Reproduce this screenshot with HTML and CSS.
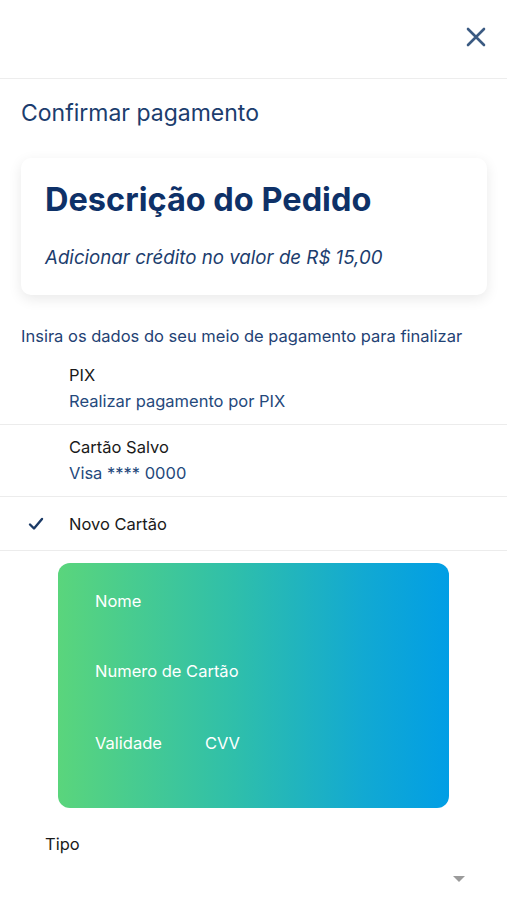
FILE: index.html
```html
<!DOCTYPE html>
<html lang="pt">
<head>
<meta charset="utf-8">
<link rel="stylesheet" href="styles.css">
</head>
<body>
<header class="topbar">
  <button class="close" aria-label="Fechar">
    <svg width="20" height="20" viewBox="0 0 20 20"><path d="M2 2 L18 18 M18 2 L2 18" stroke="#3b5a82" stroke-width="2.6" stroke-linecap="round" fill="none"/></svg>
  </button>
</header>
<main class="content">
  <h1 class="page-title">Confirmar pagamento</h1>
  <section class="order-card">
    <h2 class="order-title">Descrição do Pedido</h2>
    <p class="order-desc">Adicionar crédito no valor de R$ 15,00</p>
  </section>
  <p class="instructions">Insira os dados do seu meio de pagamento para finalizar</p>
  <ul class="methods">
    <li class="method">
      <span class="check"></span>
      <div class="method-text">
        <span class="method-name">PIX</span>
        <span class="method-sub">Realizar pagamento por PIX</span>
      </div>
    </li>
    <li class="method">
      <span class="check"></span>
      <div class="method-text">
        <span class="method-name">Cartão Salvo</span>
        <span class="method-sub">Visa **** 0000</span>
      </div>
    </li>
    <li class="method single">
      <span class="check">
        <svg width="16" height="14" viewBox="0 0 16 14"><path d="M2 7.5 L6 11.5 L14 2" stroke="#1b3a66" stroke-width="2.4" fill="none" stroke-linecap="round" stroke-linejoin="round"/></svg>
      </span>
      <div class="method-text">
        <span class="method-name">Novo Cartão</span>
      </div>
    </li>
  </ul>
  <div class="credit-card">
    <span class="cc-label">Nome</span>
    <span class="cc-label">Numero de Cartão</span>
    <div class="cc-row">
      <span class="cc-label">Validade</span>
      <span class="cc-label">CVV</span>
    </div>
  </div>
  <div class="field">
    <span class="field-label">Tipo</span>
    <div class="select"><span class="arrow"></span></div>
  </div>
</main>
</body>
</html>
```
FILE: styles.css
```css
* { box-sizing: border-box; }
html, body { margin: 0; padding: 0; background: #fff; }
body {
  font-family: Inter, "Noto Sans", sans-serif;
  color: #1a1a1a;
  width: 507px;
  overflow: hidden;
}
.topbar {
  height: 79px;
  border-bottom: 1px solid #ededed;
  display: flex;
  align-items: center;
  justify-content: flex-end;
  padding: 0 21px 4px 0;
}
.close {
  border: 0;
  background: none;
  padding: 0;
  width: 20px;
  height: 20px;
  display: flex;
}
.content { padding: 0; }
.page-title {
  margin: 20px 0 0 21px;
  font-size: 23px;
  line-height: 28px;
  font-weight: 400;
  color: #1c3d6e;
}
.order-card {
  margin: 31px 20px 0 21px;
  height: 137px;
  border-radius: 10px;
  background: #fff;
  box-shadow: 0 4px 14px rgba(0,0,0,0.09);
  padding: 22px 24px 0 24px;
}
.order-title {
  margin: 0;
  font-size: 32.5px;
  line-height: 40px;
  font-weight: 700;
  color: #0e3168;
}
.order-desc {
  margin: 26px 0 0;
  font-size: 18.7px;
  line-height: 24px;
  font-style: italic;
  color: #1c3d6e;
}
.instructions {
  margin: 30px 0 5px 21px;
  font-size: 16.5px;
  line-height: 22px;
  color: #1f4274;
}
.methods { list-style: none; margin: 0; padding: 0; }
.method {
  display: flex;
  align-items: center;
  padding: 10px 0;
  border-bottom: 1px solid #ececec;
}
.method + .method { padding: 9px 0 10px; }
.method.single { padding: 14px 0 13px; }
.check {
  width: 69px;
  display: flex;
  justify-content: flex-start;
  padding-left: 28px;
}
.method-text { display: flex; flex-direction: column; }
.method-name { font-size: 16.5px; line-height: 26px; color: #1a1a1a; }
.method-sub { font-size: 16.5px; line-height: 26px; color: #25497c; }
.credit-card {
  margin: 12px 0 0 58px;
  width: 391px;
  height: 245px;
  border-radius: 12px;
  background: linear-gradient(90deg, #5ad57c 0%, #2fbfaa 45%, #12a9d2 78%, #019ee5 100%);
  padding: 27px 37px 0;
  display: flex;
  flex-direction: column;
  gap: 48px;
}
.cc-label { color: #fff; font-size: 16.5px; line-height: 22px; }
.cc-row { display: flex; gap: 43px; margin-top: 2px; }
.field { margin: 25px 0 0 45px; }
.field-label { display: block; font-size: 16.5px; line-height: 22px; color: #1a1a1a; }
.select {
  height: 48px;
  margin-right: 40px;
  display: flex;
  align-items: center;
  justify-content: flex-end;
}
.arrow {
  width: 0; height: 0;
  border-left: 6px solid transparent;
  border-right: 6px solid transparent;
  border-top: 6px solid #9b9b9b;
  margin-right: 2px;
}
```
